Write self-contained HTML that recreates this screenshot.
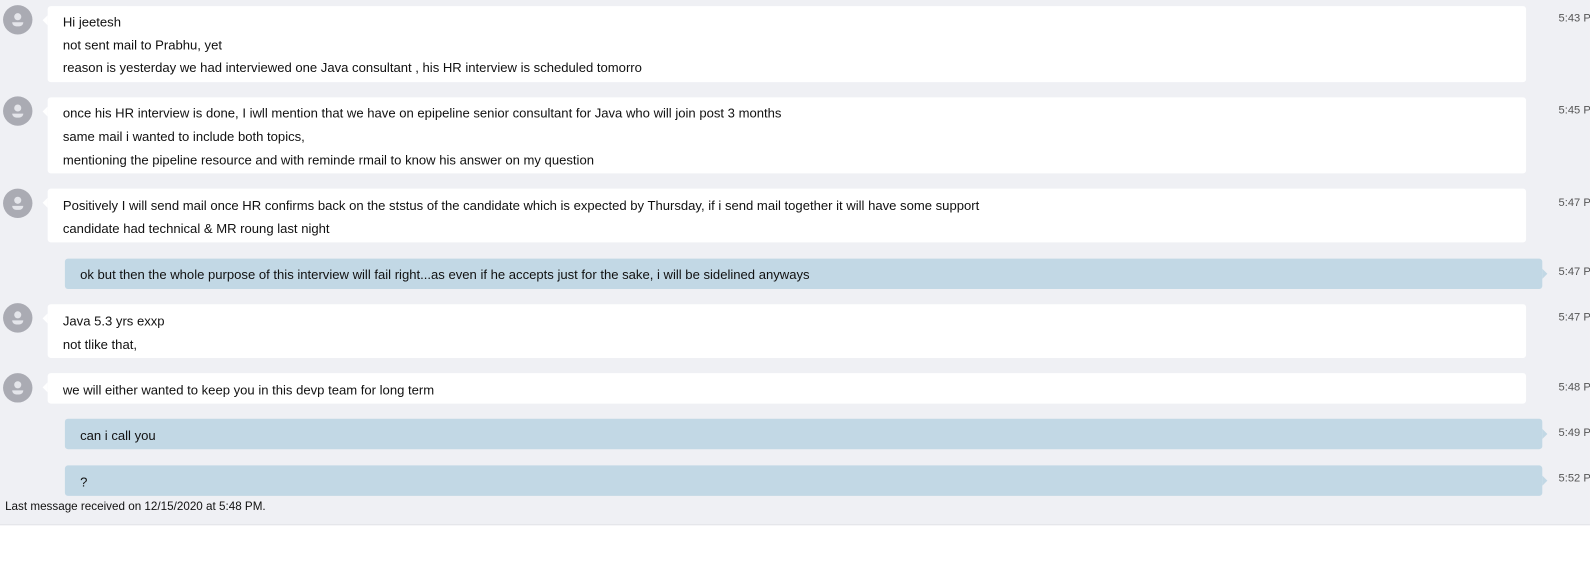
<!DOCTYPE html>
<html><head><meta charset="utf-8"><style>
*{margin:0;padding:0;box-sizing:border-box}
body{width:1590px;height:578px;background:#fff;font-family:"Liberation Sans",sans-serif;position:relative;overflow:hidden}
#w{position:absolute;left:0;top:0;width:1568px;height:570px;transform:scale(1.014);transform-origin:0 0}
#bg{position:absolute;left:0;top:0;width:1568px;height:518px;background:#eff0f4;border-bottom:1px solid #e2e3e7}
.av{position:absolute;left:3px;width:29px;height:29px;border-radius:50%;background:#aaabb3;overflow:hidden}
.av:before{content:"";position:absolute;left:11px;top:8px;width:7px;height:7px;border-radius:50%;background:#e4e5ea}
.av:after{content:"";position:absolute;left:9px;top:17px;width:11px;height:4px;border-radius:0 0 6px 6px;background:#e4e5ea}
.b{position:absolute;left:47px;width:1458px;background:#fff;border-radius:3px;font-size:12.9px;color:#111}
.b:before{content:"";position:absolute;left:-5px;top:9px;border:5px solid transparent;border-left:0;border-right-color:#fff}
.s{left:64px;width:1457px;background:#c2d8e5}
.s:before{left:auto;right:-5px;border-right:0;border-left:5px solid #c2d8e5;top:10px}
.l{position:absolute;left:15px;white-space:nowrap;line-height:16px;margin-top:1px}
.t{position:absolute;left:1537px;font-size:11px;color:#555;white-space:nowrap}
#f{position:absolute;left:5px;top:494px;font-size:11.5px;color:#111}
</style></head><body><div id="w">
<div id="bg"></div>
<div class="av" style="top:5px"></div>
<div class="b" style="top:6px;height:75px"><div class="l" style="top:7px">Hi jeetesh</div><div class="l" style="top:30px">not sent mail to Prabhu, yet</div><div class="l" style="top:52px">reason is yesterday we had interviewed one Java consultant , his HR interview is scheduled tomorro</div></div>
<div class="t" style="top:12px">5:43 P</div>
<div class="av" style="top:95px"></div>
<div class="b" style="top:96px;height:75px"><div class="l" style="top:7px">once his HR interview is done, I iwll mention that we have on epipeline senior consultant for Java who will join post 3 months</div><div class="l" style="top:30px">same mail i wanted to include both topics,</div><div class="l" style="top:53px">mentioning the pipeline resource and with reminde rmail to know his answer on my question</div></div>
<div class="t" style="top:103px">5:45 P</div>
<div class="av" style="top:186px"></div>
<div class="b" style="top:186px;height:53px"><div class="l" style="top:8px">Positively I will send mail once HR confirms back on the ststus of the candidate which is expected by Thursday, if i send mail together it will have some support</div><div class="l" style="top:31px">candidate had technical &amp; MR roung last night</div></div>
<div class="t" style="top:194px">5:47 P</div>
<div class="b s" style="top:255px;height:30px"><div class="l" style="top:7px">ok but then the whole purpose of this interview will fail right...as even if he accepts just for the sake, i will be sidelined anyways</div></div>
<div class="t" style="top:262px">5:47 P</div>
<div class="av" style="top:299px"></div>
<div class="b" style="top:300px;height:53px"><div class="l" style="top:8px">Java 5.3 yrs exxp</div><div class="l" style="top:31px">not tlike that,</div></div>
<div class="t" style="top:307px">5:47 P</div>
<div class="av" style="top:368px"></div>
<div class="b" style="top:368px;height:30px"><div class="l" style="top:8px">we will either wanted to keep you in this devp team for long term</div></div>
<div class="t" style="top:376px">5:48 P</div>
<div class="b s" style="top:413px;height:30px"><div class="l" style="top:8px">can i call you</div></div>
<div class="t" style="top:421px">5:49 P</div>
<div class="b s" style="top:459px;height:30px"><div class="l" style="top:8px">?</div></div>
<div class="t" style="top:466px">5:52 P</div>
<div id="f">Last message received on 12/15/2020 at 5:48 PM.</div>
</div></body></html>
